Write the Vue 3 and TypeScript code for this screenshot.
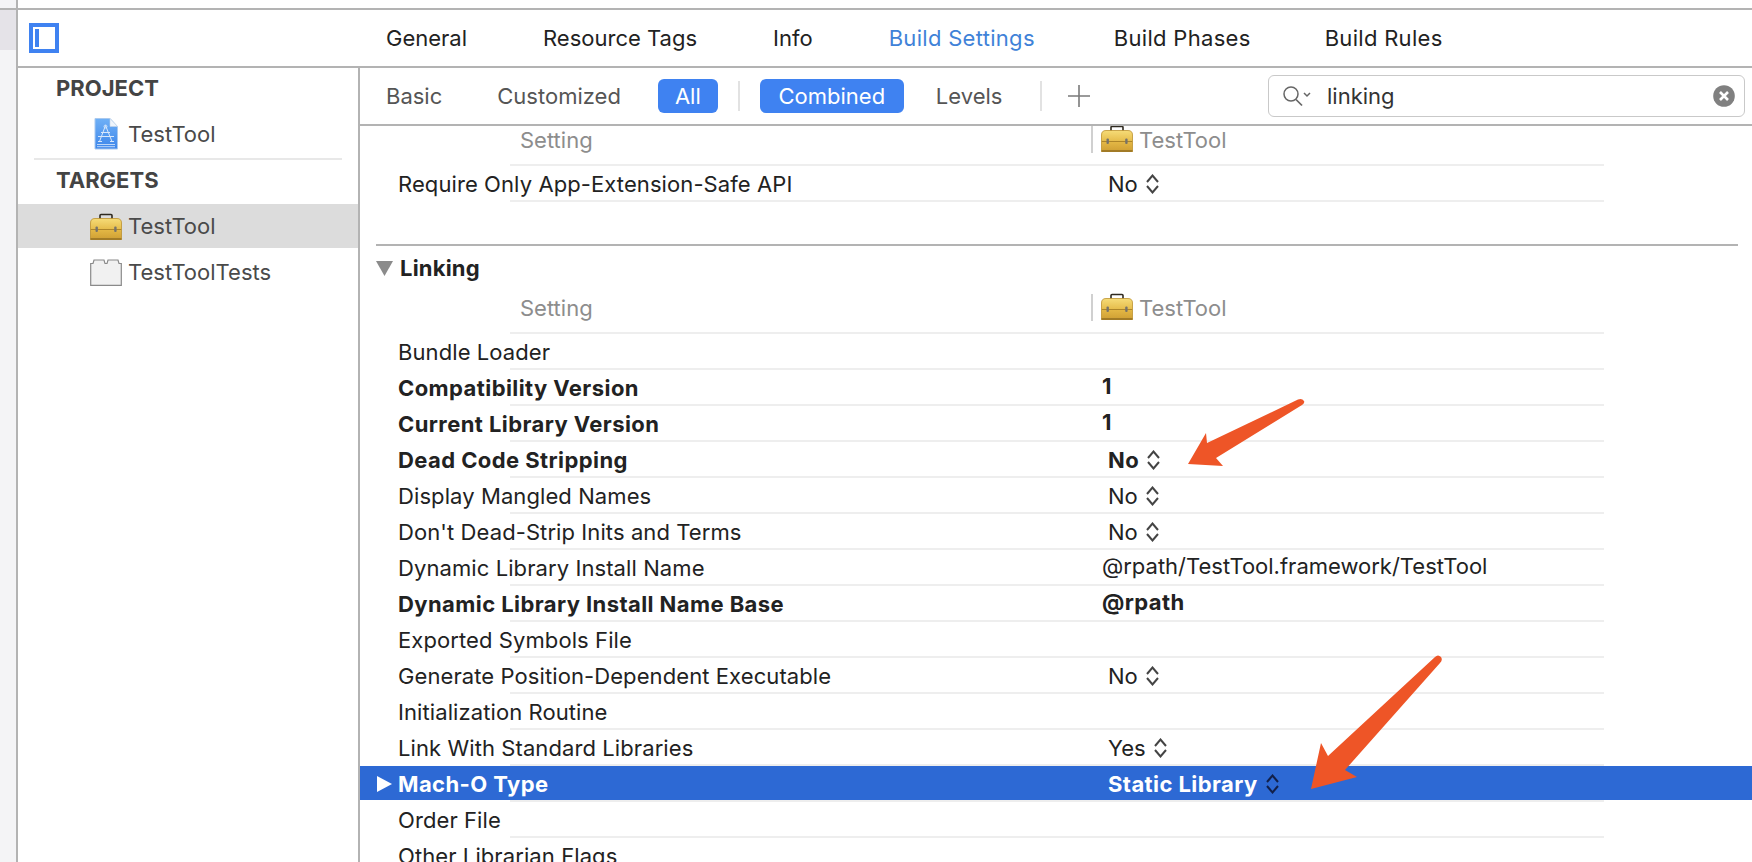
<script setup lang="ts">
interface Row { name: string; value?: string; bold?: boolean; stepper?: boolean; selected?: boolean }
const tabs = ['General', 'Resource Tags', 'Info', 'Build Settings', 'Build Phases', 'Build Rules']
const rows: Row[] = [
  { name: 'Bundle Loader' },
  { name: 'Compatibility Version', value: '1', bold: true },
  { name: 'Current Library Version', value: '1', bold: true },
  { name: 'Dead Code Stripping', value: 'No', bold: true, stepper: true },
  { name: 'Display Mangled Names', value: 'No', stepper: true },
  { name: "Don't Dead-Strip Inits and Terms", value: 'No', stepper: true },
  { name: 'Dynamic Library Install Name', value: '@rpath/TestTool.framework/TestTool' },
  { name: 'Dynamic Library Install Name Base', value: '@rpath', bold: true },
  { name: 'Exported Symbols File' },
  { name: 'Generate Position-Dependent Executable', value: 'No', stepper: true },
  { name: 'Initialization Routine' },
  { name: 'Link With Standard Libraries', value: 'Yes', stepper: true },
  { name: 'Mach-O Type', value: 'Static Library', bold: true, stepper: true, selected: true },
  { name: 'Order File' },
  { name: 'Other Librarian Flags' },
]
</script>

<template>
  <div class="window">
    <svg class="defs" aria-hidden="true">
      <defs>
        <linearGradient id="gold" x1="0" y1="0" x2="0" y2="1">
          <stop offset="0" stop-color="#f6dc78" />
          <stop offset="0.5" stop-color="#e6bd4c" />
          <stop offset="0.52" stop-color="#a98126" />
          <stop offset="0.57" stop-color="#e2b644" />
          <stop offset="1" stop-color="#cf9f33" />
        </linearGradient>
        <linearGradient id="docblue" x1="0" y1="0" x2="0" y2="1">
          <stop offset="0" stop-color="#6fb0f6" />
          <stop offset="1" stop-color="#3d86ea" />
        </linearGradient>
        <symbol id="toolbox" viewBox="0 0 32 27">
          <path d="M10 6.500V2.500q0-1 1-1h10q1 0 1 1v4" fill="none" stroke="#2f2a20" stroke-width="1.600" />
          <path d="M5 5.500h22q4.500 0 4.500 4.500v16.500H.5V10q0-4.500 4.500-4.500z" fill="url(#gold)" stroke="#bd922f" stroke-width="0.800" />
          <path d="M.5 25h31v2H.5z" fill="#a27b26" />
          <rect x="5.500" y="13.500" width="2.400" height="5.500" rx="1" fill="#77736a" />
          <rect x="24.200" y="13.500" width="2.400" height="5.500" rx="1" fill="#77736a" />
        </symbol>
      </defs>
    </svg>

    <div class="strip">
      <div class="strip-top"></div>
      <div class="strip-line"></div>
      <div class="strip-active"></div>
    </div>

    <div class="main">
      <header class="tabs">
        <span class="panel-toggle"><i></i></span>
        <nav class="tab-list">
          <span v-for="t in tabs" :key="t" class="tab" :class="{ active: t === 'Build Settings', build: t.startsWith('Build') }">{{ t }}</span>
        </nav>
      </header>

      <div class="body">
        <aside class="sidebar">
          <div class="heading">PROJECT</div>
          <div class="item">
            <svg class="doc" width="24" height="32" viewBox="0 0 24 32">
              <path d="M1 .5h15l7.500 8V31H1z" fill="url(#docblue)" stroke="#a9c9ef" />
              <path d="M16 .5v8h7.500z" fill="#eef4fb" stroke="#c3d3e6" stroke-width="0.600" />
              <path d="M3 26.500h18M3 28.700h18" stroke="#dceafb" stroke-width="0.800" />
              <path d="M11.500 7.500L5.500 23.500M11.500 7.500l6.500 16M4 18.500h16M4 23.500h4M16 23.500h4M7 14.500h9" fill="none" stroke="#d8e8fb" stroke-width="1" />
              <circle cx="11.500" cy="8.500" r="1.500" fill="none" stroke="#d8e8fb" stroke-width="0.800" />
            </svg>
            <span>TestTool</span>
          </div>
          <div class="sep"></div>
          <div class="heading">TARGETS</div>
          <div class="item selected">
            <svg class="ticon" width="32" height="27"><use href="#toolbox" /></svg>
            <span>TestTool</span>
          </div>
          <div class="item tests">
            <svg class="ticon" width="32" height="27" viewBox="0 0 32 27">
              <path d="M.7 26.300V4.500H3l1-3.500h10l1 3.500h2l1-3.500h10l1 3.500h2.300v21.800z" fill="#f1f1f1" stroke="#8a8a8a" stroke-width="1.200" />
            </svg>
            <span>TestToolTests</span>
          </div>
        </aside>

        <section class="pane">
          <div class="filters">
            <span class="flt first">Basic</span>
            <span class="flt custom">Customized</span>
            <span class="pill all">All</span>
            <span class="vsep one"></span>
            <span class="pill combined">Combined</span>
            <span class="flt levels">Levels</span>
            <span class="vsep two"></span>
            <svg class="plus" width="22" height="22" viewBox="0 0 22 22"><path d="M11 0v22M0 11h22" stroke="#7a7a7a" stroke-width="1.600" /></svg>
            <div class="search">
              <svg width="30" height="24" viewBox="0 0 30 24">
                <circle cx="9" cy="10" r="7" fill="none" stroke="#666" stroke-width="1.500" />
                <path d="M14 15.500l6 6" stroke="#666" stroke-width="1.700" />
                <path d="M22 9l3 3 3-3" fill="none" stroke="#666" stroke-width="1.500" />
              </svg>
              <span class="query">linking</span>
              <svg class="clear" width="22" height="22" viewBox="0 0 22 22">
                <circle cx="11" cy="11" r="10.800" fill="#808080" />
                <path d="M7 7l8 8M15 7l-8 8" stroke="#fff" stroke-width="2.600" />
              </svg>
            </div>
          </div>

          <div class="scroll">
            <div class="head-row">
              <span class="setting">Setting</span>
              <span class="col-target">
                <svg class="hicon" width="32" height="27"><use href="#toolbox" /></svg>
                <span>TestTool</span>
              </span>
            </div>
            <div class="row">
              <span class="name">Require Only App-Extension-Safe API</span>
              <span class="val pad">No</span>
              <svg class="step" width="13" height="20" viewBox="0 0 13 20"><path d="M1 8l5.500-6.500L12 8M1 12l5.500 6.500L12 12" fill="none" stroke="#444" stroke-width="2" /></svg>
            </div>

            <div class="section-line"></div>
            <div class="section-head">
              <svg width="17" height="15" viewBox="0 0 17 15"><path d="M0 0h17L8.500 15z" fill="#8b8b8b" /></svg>
              <span>Linking</span>
            </div>
            <div class="head-row">
              <span class="setting">Setting</span>
              <span class="col-target">
                <svg class="hicon" width="32" height="27"><use href="#toolbox" /></svg>
                <span>TestTool</span>
              </span>
            </div>

            <div v-for="r in rows" :key="r.name" class="row" :class="{ bold: r.bold, sel: r.selected }">
              <svg v-if="r.selected" class="disc" width="15" height="16" viewBox="0 0 15 16"><path d="M0 0l15 8L0 16z" fill="#fff" /></svg>
              <span class="name">{{ r.name }}</span>
              <span v-if="r.value" class="val" :class="{ pad: r.stepper }">{{ r.value }}</span>
              <svg v-if="r.stepper" class="step" width="13" height="20" viewBox="0 0 13 20"><path d="M1 8l5.500-6.500L12 8M1 12l5.500 6.500L12 12" fill="none" :stroke="r.selected ? '#12204a' : '#444'" stroke-width="2" /></svg>
            </div>
          </div>
        </section>
      </div>
    </div>

    <svg class="arrows" width="1752" height="862" viewBox="0 0 1752 862">
      <path d="M1298 399.500Q1302 398 1304 401Q1305 403 1302 405L1216 458L1223 466L1188 464L1206 433L1207 443z" fill="#ee5527" />
      <path d="M1435 657Q1438 654 1441 657Q1443 660 1440 663L1345 770L1357 777L1311 789L1321 743L1328 756z" fill="#ee5527" />
    </svg>
  </div>
</template>

<style>
html, body { margin: 0; background: #fff; overflow: hidden; }
</style>

<style scoped>
.window {
  position: relative;
  display: flex;
  width: 1752px;
  height: 862px;
  overflow: hidden;
  background: #fff;
  font-family: Inter, "Liberation Sans", sans-serif;
  font-size: 22px;
  color: #222;
}
.defs { position: absolute; width: 0; height: 0; }
.arrows { position: absolute; left: 0; top: 0; pointer-events: none; }

.strip {
  box-sizing: border-box;
  width: 18px;
  flex: none;
  background: #f4f4f6;
  border-right: 2px solid #b3b3b3;
}
.strip-top { height: 8px; }
.strip-line { height: 2px; background: #b3b3b3; }
.strip-active { height: 40px; background: #e5e3e8; }

.main { flex: 1; display: flex; flex-direction: column; padding-top: 8px; min-width: 0; }

.tabs {
  box-sizing: border-box;
  height: 60px;
  flex: none;
  display: flex;
  align-items: center;
  padding: 0 0 0 11px;
  border-top: 2px solid #b3b3b3;
  border-bottom: 2px solid #b3b3b3;
}
.panel-toggle {
  box-sizing: border-box;
  width: 30px;
  height: 30px;
  border: 4px solid #3f82f1;
  padding: 2px;
  display: flex;
  margin-right: 327px;
}
.panel-toggle i { width: 4px; height: 18px; background: #3f82f1; }
.tab-list { display: flex; gap: 76px; }
.tab { white-space: nowrap; }
.tab.build { letter-spacing: 0.3px; }
.tab.active { color: #3f82d8; margin-right: 3px; }
.tab.build:last-child { margin-left: -2px; }

.body { flex: 1; display: flex; min-height: 0; }

.sidebar {
  box-sizing: border-box;
  width: 342px;
  flex: none;
  border-right: 2px solid #b3b3b3;
}
.heading {
  height: 40px;
  line-height: 40px;
  margin-bottom: 4px;
  padding-left: 38px;
  font-weight: 700;
  color: #444;
}
.item {
  height: 44px;
  display: flex;
  align-items: center;
  color: #4a4a4a;
}
.item svg + span { margin-left: 6px; }
.item .doc { margin-left: 76px; margin-right: 4px; }
.item .ticon { margin-left: 72px; }
.item.selected { background: #dcdcdc; }
.item.tests { height: 48px; }
.sep { height: 2px; margin: 2px 16px 0; background: #e8e8e8; }

.pane { flex: 1; display: flex; flex-direction: column; min-width: 0; }

.filters {
  box-sizing: border-box;
  height: 58px;
  flex: none;
  display: flex;
  align-items: center;
  border-bottom: 2px solid #b3b3b3;
  padding-left: 26px;
  color: #555;
}
.flt { white-space: nowrap; }
.custom { margin-left: 55px; }
.pill {
  box-sizing: border-box;
  height: 34px;
  line-height: 34px;
  border-radius: 6px;
  background: #3f82f1;
  color: #fff;
  text-align: center;
}
.all { width: 60px; margin-left: 37px; }
.combined { width: 144px; }
.vsep { width: 2px; height: 30px; background: #e2e2e2; }
.vsep.one { margin: 0 20px; }
.levels { margin-left: 32px; }
.vsep.two { margin-left: 38px; }
.plus { margin-left: 26px; }
.search {
  box-sizing: border-box;
  width: 477px;
  height: 42px;
  margin-left: auto;
  margin-right: 7px;
  display: flex;
  align-items: center;
  border: 1px solid #c9c9c9;
  border-radius: 6px;
  padding-left: 13px;
  color: #333;
}
.query { margin-left: 15px; }
.clear { margin-left: auto; margin-right: 9px; }

.scroll { flex: 1; overflow: hidden; min-height: 0; }

.head-row {
  box-sizing: border-box;
  height: 40px;
  display: flex;
  align-items: flex-start;
  background: linear-gradient(#eee, #eee) no-repeat 150px 100% / 1094px 2px;
  color: #8d8d8d;
}
.setting { width: 571px; margin-left: 160px; line-height: 29px; }
.col-target {
  display: flex;
  height: 27px;
  line-height: 29px;
  border-left: 2px solid #d0d0d0;
}
.hicon { margin: -1px 6px 0 8px; }

.row {
  box-sizing: border-box;
  height: 36px;
  padding: 0 0 1px 38px;
  display: flex;
  align-items: center;
  white-space: nowrap;
  letter-spacing: 0.09px;
  background: linear-gradient(#eee, #eee) no-repeat 150px 100% / 1094px 2px;
}
.name { width: 705px; flex: none; }
.val { margin: 0 0 3px -1px; letter-spacing: 0; }
.val.pad { margin: 0 0 0 5px; }
.step { margin-left: 8px; }
.row.bold, .row.bold .val { letter-spacing: 0.42px; }
.bold { font-weight: 700; }
.sel {
  background:
    linear-gradient(#eee, #eee) no-repeat 150px 100% / 1094px 2px,
    linear-gradient(#2d69d4, #2d69d4) no-repeat 0 0 / 100% 34px;
  color: #fff;
}
.disc { flex: none; margin: 0 6px 0 -21px; }

.section-line { height: 2px; width: 1362px; margin: 42px 0 0 16px; background: #b3b3b3; }
.section-head {
  height: 44px;
  margin-bottom: 4px;
  display: flex;
  align-items: center;
  padding-left: 16px;
  font-weight: 700;
  letter-spacing: 0.2px;
}
.section-head span { margin-left: 7px; }
</style>
